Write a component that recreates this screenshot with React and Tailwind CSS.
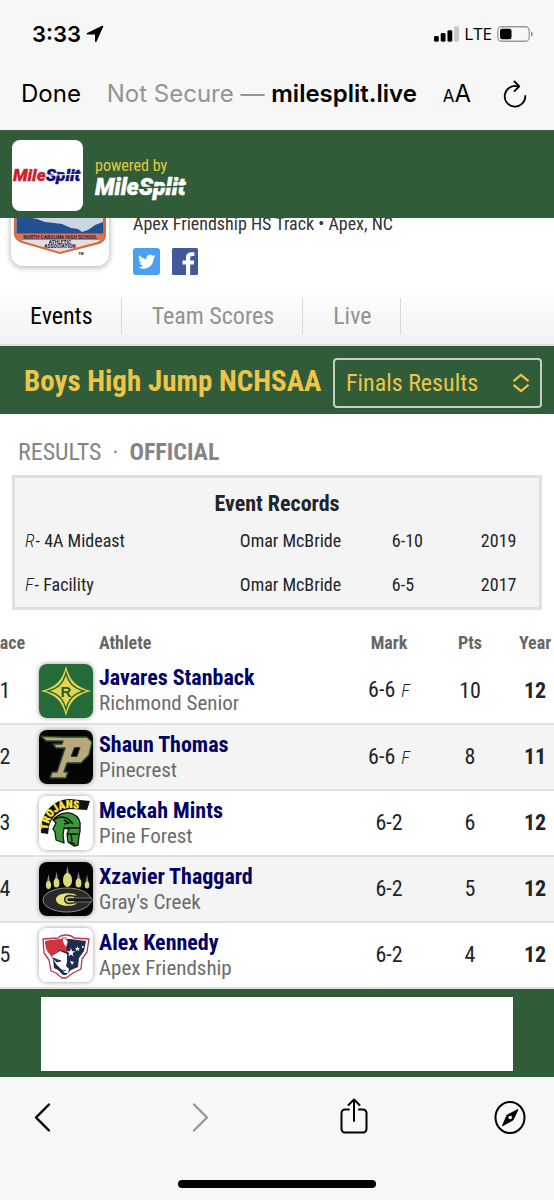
import React from "react";

function StatusBar() {
  return (
    <div className="flex h-[68px] items-center justify-between pl-8 pr-5">
      <div className="flex items-center gap-1">
        <span className="text-[22px] font-semibold leading-7">3:33</span>
        <svg width="20" height="20" viewBox="0 0 20 20" aria-hidden="true">
          <path
            d="M17.500 2.500L10.800 17.200V9.700H2.500z"
            stroke="#000"
            strokeWidth="1.600"
            strokeLinejoin="round"
          />
        </svg>
      </div>
      <div className="flex items-center gap-[5px]">
        <svg width="25" height="16" viewBox="0 0 26 16" aria-hidden="true">
          <rect x="0" y="10" width="5" height="6" rx="1.500" />
          <rect x="7" y="7" width="5" height="9" rx="1.500" />
          <rect x="14" y="4" width="5" height="12" rx="1.500" />
          <rect x="21" y="0" width="5" height="16" rx="1.500" fill="#c8c8c8" />
        </svg>
        <span className="font-['Open_Sans',sans-serif] text-[17px] font-medium leading-6">LTE</span>
        <svg width="37" height="16" viewBox="0 0 37 16" aria-hidden="true">
          <rect x=".75" y=".75" width="31.500" height="14.500" rx="4" fill="none" stroke="#999" strokeWidth="1.300" />
          <rect x="3" y="2.800" width="11.500" height="10.500" rx="2.200" />
          <path d="M34 5.500c2.300.8 2.300 4.200 0 5z" fill="#888" />
        </svg>
      </div>
    </div>
  );
}

function AddressBar() {
  return (
    <div className="flex h-[62px] items-start pl-[21px] pr-[27px] pt-[10px]">
      <button className="text-[24px] leading-8">Done</button>
      <p className="flex-1 text-center text-[24px] leading-8">
        <span className="text-[#949494]">Not Secure — </span>
        <span className="font-semibold">milesplit.live</span>
      </p>
      <button aria-label="Text size" className="mr-8 leading-8">
        <span className="text-[17px]">A</span>
        <span className="text-[24px]">A</span>
      </button>
      <button aria-label="Reload" className="h-8">
        <svg width="24" height="28" viewBox="0 0 24 28" fill="none" stroke="#000" strokeWidth="1.800" strokeLinecap="round" strokeLinejoin="round">
          <path d="M14.500 6.300A10.300 10.300 0 1 0 22.300 16M11.500 1.500l4.800 4.800-4.800 4.800" />
        </svg>
      </button>
    </div>
  );
}

function MileSplitMark({ first, second, slash, className }) {
  return (
    <svg viewBox="0 0 94 28" className={"overflow-visible " + className} role="img" aria-label="MileSplit">
      <text x="0" y="21" fontFamily="'Roboto', sans-serif" fontStyle="italic" fontWeight="900" fontSize="23" strokeWidth=".5">
        <tspan fill={first} stroke={first}>Mile</tspan>
        <tspan fill={second} stroke={second}>Split</tspan>
      </text>
      <path d="M43 13.800l50-1.500" stroke={slash} strokeWidth="1.400" fill="none" />
    </svg>
  );
}

function SiteHeader() {
  return (
    <header className="flex h-[88px] items-center gap-3 border-t-2 border-[#3f5a41] bg-[#305c39] px-3">
      <div className="flex size-[71px] items-center justify-center rounded-lg bg-white">
        <MileSplitMark first="#c8232c" second="#10107c" slash="#fff" className="w-[70px]" />
      </div>
      <div className="pt-[9px]">
        <p className="text-[16px] leading-4 text-[#e3c93f]">powered by</p>
        <MileSplitMark first="#fff" second="#fff" slash="#305c39" className="w-[94px]" />
      </div>
    </header>
  );
}

function AssociationBadge() {
  return (
    <svg width="98" height="98" viewBox="0 0 98 98" role="img" aria-label="North Carolina High School Athletic Association">
      <path d="M3 8h92v58c0 5-2 8-7 10L49 86 11 75c-5-2-8-5-8-9z" fill="#d8663f" />
      <path d="M5.500 10h87v56c0 4-2 6-6 8L49 84 13 73.500c-5-2-7-4-7.500-8z" fill="#e4ded9" />
      <path d="M5.500 30h87v37h-87z" fill="#245090" />
      <path d="M16 40h76v14l-8 3-7 5-6 2-4-3-7-1-9-4-8-1-9-1-8-3-10-2z" fill="#ccd6e2" />
      <path d="M4 65.500h90l-2 6.500H7z" fill="#dd7450" />
      <g fill="#1c2f62" fontFamily="'Roboto', sans-serif" fontWeight="900" textAnchor="middle">
        <text x="49" y="70.500" fontSize="4.800">NORTH CAROLINA HIGH SCHOOL</text>
        <text x="49" y="75.800" fontSize="4.800">ATHLETIC</text>
        <text x="49" y="80" fontSize="4.800">ASSOCIATION</text>
        <text x="70" y="87" fontSize="3.500">TM</text>
      </g>
    </svg>
  );
}

function MeetSummary() {
  return (
    <section className="flex h-[68px] items-end gap-6 overflow-hidden pl-[11px]">
      <div className="mb-5 shrink-0 rounded-xl bg-white shadow-[0_1px_6px_rgba(0,0,0,0.35)]">
        <AssociationBadge />
      </div>
      <div className="mb-[11px] flex flex-col gap-3">
        <p className="text-[18px] leading-6 text-[#333]">Apex Friendship HS Track • Apex, NC</p>
        <div className="flex gap-3">
          <a href="#twitter" aria-label="Twitter">
            <svg width="27" height="27" viewBox="0 0 27 27">
              <rect width="27" height="27" rx="3" fill="#4a9ff0" />
              <path transform="translate(4.500 4.500) scale(.76)" fill="#fff" d="M23.600 5c-.8.400-1.700.6-2.700.8 1-.6 1.700-1.500 2-2.600-.9.500-1.900.9-3 1.100a4.700 4.700 0 0 0-8 4.300C8 8.400 4.600 6.500 2.300 3.700c-1.200 2.100-.6 4.800 1.500 6.200-.8 0-1.500-.2-2.100-.6 0 2.300 1.600 4.200 3.700 4.700-.7.200-1.400.2-2.100.1.600 1.800 2.300 3.200 4.400 3.200A9.500 9.500 0 0 1 .8 19.200c2.100 1.300 4.500 2.100 7.200 2.100 8.700 0 13.600-7.400 13.300-13.900.9-.7 1.700-1.500 2.300-2.400z" />
            </svg>
          </a>
          <a href="#facebook" aria-label="Facebook">
            <svg width="26" height="27" viewBox="0 0 26 27">
              <rect width="26" height="27" rx="1.500" fill="#41589b" />
              <path fill="#fff" d="M14 27V16.500h-3.500v-4H14V9.500C14 6 16.200 4.200 19.400 4.200c1.500 0 2.500.1 3 .2v3.600h-2.200c-1.700 0-2 .8-2 2v2.500h4.100l-.6 4h-3.500V27z" />
            </svg>
          </a>
        </div>
      </div>
    </section>
  );
}

function Tabs() {
  const tabs = ["Events", "Team Scores", "Live"];
  return (
    <nav className="flex h-[60px] items-center border-b-2 border-[#e2e2e2] bg-linear-to-b from-white to-[#f2f2f2] pt-[2px]">
      {tabs.map((tab, i) => (
        <a
          key={tab}
          href={"#" + tab.toLowerCase().replace(" ", "-")}
          className={
            "border-r border-[#d8d8d8] pl-[30px] pr-7 text-[24px] leading-9 " + (i === 0 ? "text-black" : "text-[#929292]")
          }
        >
          {tab}
        </a>
      ))}
    </nav>
  );
}

function EventBar() {
  return (
    <div className="flex h-[68px] items-center justify-between bg-[#305c39] pl-6 pr-3">
      <h1 className="whitespace-nowrap pt-[2px] text-[29px] font-bold leading-9 text-[#ecc549]">Boys High Jump NCHSAA</h1>
      <div className="relative w-[209px] shrink-0 pt-[5px]">
        <select
          aria-label="Round"
          className="h-[50px] w-full appearance-none rounded border-2 border-[#c3d1c5] bg-[#305c39] pl-[11px] text-[24px] text-[#ecc549]"
        >
          <option>Finals Results</option>
        </select>
        <svg className="pointer-events-none absolute right-3 top-5" width="18" height="20" viewBox="0 0 18 20" fill="none" stroke="#ecc549" strokeWidth="2.200">
          <path d="M1.500 8.200L9 2l7.500 6.200M1.500 11.800L9 18l7.500-6.200" />
        </svg>
      </div>
    </div>
  );
}

const records = [
  { code: "R", label: "4A Mideast", holder: "Omar McBride", mark: "6-10", year: "2019" },
  { code: "F", label: "Facility", holder: "Omar McBride", mark: "6-5", year: "2017" },
];

function EventRecords() {
  return (
    <div className="mx-3 border-[3px] border-[#e0e0e0] bg-[#f4f4f4] pt-[10px] text-[#212529]">
      <table className="w-full table-fixed text-left text-[18px] leading-6">
        <caption className="h-[31px] text-[22px] font-bold leading-[31px]">Event Records</caption>
        <colgroup>
          <col className="w-[41%]" />
          <col className="w-[29%]" />
          <col className="w-[17%]" />
          <col />
        </colgroup>
        <tbody>
          {records.map((r) => (
            <tr key={r.code} className="h-11">
              <td className="pl-[10px]">
                <i className="pr-[1px] font-light">{r.code}</i>- {r.label}
              </td>
              <td className="pl-[10px]">{r.holder}</td>
              <td className="pl-[10px]">{r.mark}</td>
              <td className="pl-[10px]">{r.year}</td>
            </tr>
          ))}
        </tbody>
      </table>
    </div>
  );
}

function RichmondLogo() {
  return (
    <svg viewBox="0 0 54 54" className="size-full">
      <rect width="54" height="54" fill="#256b3a" />
      <path d="M27 2c3.500 14 10 21.500 25 25-15 3.500-21.500 11-25 25C23.500 38 17 30.500 2 27 17 23.500 23.500 16 27 2z" fill="#ead44e" />
      <path d="M27 9c3 10.500 7.500 15 18 18-10.500 3-15 7.500-18 18-3-10.500-7.500-15-18-18 10.500-3 15-7.500 18-18z" fill="none" stroke="#256b3a" strokeWidth="1.500" />
      <text x="27" y="32.500" textAnchor="middle" fontFamily="'Liberation Sans', sans-serif" fontWeight="700" fontSize="15" fill="#1f5c33">R</text>
    </svg>
  );
}

function PinecrestLogo() {
  return (
    <svg viewBox="0 0 54 54" className="size-full">
      <rect width="54" height="54" fill="#050505" />
      <path
        d="M2 6c13 1.500 26 1 46 1l5 5-3 13-8 8H28l-3 9h4l-2 6H11l2-6h5l8-24h-9l-3-4h9l1-3H7z"
        fill="#b9a878"
        stroke="#24482c"
        strokeWidth="1.400"
        strokeLinejoin="round"
      />
      <path d="M35.500 17.500H41l-3 9h-6z" fill="#050505" stroke="#24482c" />
    </svg>
  );
}

function TrojansLogo() {
  return (
    <svg viewBox="0 0 54 54" className="size-full">
      <rect width="54" height="54" fill="#fff" />
      <path d="M2 37C1 18 13 3.500 31 3l20 2-3 9-16-1C20 14 12 21 10 31l-1 7z" fill="#111" />
      <defs>
        <path id="trojanArc" d="M9 36C8 21 18 12 31 12l22 2" />
      </defs>
      <text fontFamily="'Roboto Condensed', sans-serif" fontWeight="900" fontSize="11" fill="#f4e83b" stroke="#f4e83b" strokeWidth=".3">
        <textPath href="#trojanArc" startOffset="2">TROJANS</textPath>
      </text>
      <path
        d="M14 24c5-6 13-9 20-6 5 2 8 7 7 13v4l-1 5-1 9-4 1-6-4-1-8 2-5-5-1-1 7 1 8-8-3-1-8-2-3 3-6z"
        fill="#3f973b"
        stroke="#111"
        strokeWidth="1.300"
        strokeLinejoin="round"
      />
      <path d="M14 24c8-5 15-3 20 4M25 24l5 3-5 1M28 32h13M29 38h10M32 38l1 7M31 46l5 2" fill="none" stroke="#111" strokeWidth="1.500" />
    </svg>
  );
}

function GraysCreekLogo() {
  const claws = [
    [9.500, 23, 4],
    [17.500, 21, 4.500],
    [28.500, 18, 7],
    [39.500, 21, 4.500],
    [48, 23, 3.500],
  ];
  return (
    <svg viewBox="0 0 54 54" className="size-full">
      <rect width="54" height="54" fill="#050505" />
      {claws.map(([x, y, r]) => (
        <g key={x}>
          <path d={`M${x - 1.500} ${y - r + 1}L${x} ${y - r - 7}L${x + 1.500} ${y - r + 1}z`} fill="#8a8a7c" />
          <ellipse cx={x} cy={y} rx={r * 0.65} ry={r} fill="#dcd977" />
        </g>
      ))}
      <ellipse cx="28" cy="38" rx="24" ry="12" fill="#292929" stroke="#aaa" strokeWidth=".8" />
      <path d="M28 36h25v4H28z" fill="#171717" stroke="#aaa" strokeWidth=".6" />
      <path d="M38 33.500c-5-4-21-3-21 4s16 8 21 4h-3c-4 1.500-10 1-10-4s6-5.500 10-4z" fill="#e6e17d" />
      <path d="M35 35.500c-5-1-8 0-8 2s3 3 8 2" fill="none" stroke="#e6e17d" strokeWidth="1.200" />
    </svg>
  );
}

function ApexLogo() {
  return (
    <svg viewBox="0 0 54 54" className="size-full">
      <rect width="54" height="54" fill="#fff" />
      <path
        d="M4 11l15-1c4-4 12-4 16 0l15 1-2 13-5 7-1 10-8 4-7 5h-4l-6-5-5-2-2-11-5-7z"
        fill="#fff"
        stroke="#b9354a"
        strokeWidth="1.300"
        strokeLinejoin="round"
      />
      <path d="M6 13l17-2h8l16 2-2 10-5 7-1 9-7 3-5 5h-3l-5-5-4-2-1-9-5-8z" fill="#202d4e" />
      <path d="M6 13l17-2 4 4 1 9-7-2-8 6C8 25 6 19 6 13z" fill="#cf3541" />
      <path d="M23 10h4l2 4-2 6-3-5z" fill="#fff" stroke="#b52a3a" strokeWidth=".9" />
      <path d="M13 28l8-5 7 3v8l-1 4 3 3-1 4h-3l-4-4-5-5z" fill="#fff" />
      <path d="M14 30l8 3-4 1zM21 42l6 .5" fill="#202d4e" stroke="#202d4e" strokeWidth=".9" />
      <path
        d="M32 20l1 3.200h3.300l-2.700 2 1 3.300-2.600-2-2.700 2 1-3.300-2.600-2H31zM38.500 18l.7 2h2l-1.600 1.300.6 2-1.700-1.200-1.700 1.200.6-2-1.600-1.300h2zM43 18h1.500v2H43zM31 33l4 1-2 3z"
        fill="#fff"
      />
    </svg>
  );
}

const results = [
  { place: 1, name: "Javares Stanback", school: "Richmond Senior", mark: "6-6", note: "F", pts: 10, year: 12, Logo: RichmondLogo },
  { place: 2, name: "Shaun Thomas", school: "Pinecrest", mark: "6-6", note: "F", pts: 8, year: 11, Logo: PinecrestLogo },
  { place: 3, name: "Meckah Mints", school: "Pine Forest", mark: "6-2", pts: 6, year: 12, Logo: TrojansLogo },
  { place: 4, name: "Xzavier Thaggard", school: "Gray's Creek", mark: "6-2", pts: 5, year: 12, Logo: GraysCreekLogo },
  { place: 5, name: "Alex Kennedy", school: "Apex Friendship", mark: "6-2", pts: 4, year: 12, Logo: ApexLogo },
];

function ResultsTable() {
  return (
    <div className="flex justify-end overflow-hidden pt-[18px]">
      <table className="w-[calc(100%+29px)] shrink-0 table-fixed text-center text-[22px] leading-[26px] text-[#212529]">
        <colgroup>
          <col className="w-[68px]" />
          <col className="w-[60px]" />
          <col />
          <col className="w-[70px]" />
          <col className="w-[92px]" />
          <col className="w-[38px]" />
        </colgroup>
        <thead>
          <tr className="h-[30px] text-[18px] text-[#666]">
            <th>Place</th>
            <td />
            <th className="text-left">Athlete</th>
            <th>Mark</th>
            <th>Pts</th>
            <th>Year</th>
          </tr>
        </thead>
        <tbody>
          {results.map(({ Logo, ...r }) => (
            <tr key={r.place} className="h-[66px] border-b-2 border-[#e0e0e0] even:bg-[#f4f4f4]">
              <td>{r.place}</td>
              <td>
                <div className="size-[54px] overflow-hidden rounded-lg shadow-[0_0_5px_rgba(0,0,0,0.4)]">
                  <Logo />
                </div>
              </td>
              <td className="text-left">
                <a href={"#athlete-" + r.place} className="block font-bold text-[#000066]">{r.name}</a>
                <span className="block text-[21px] leading-[25px] text-[#6b6b6b]">{r.school}</span>
              </td>
              <td className="whitespace-nowrap">
                {r.mark}
                {r.note && <i className="pl-[2px] text-[18px] font-light"> {r.note}</i>}
              </td>
              <td>{r.pts}</td>
              <td className="font-bold">{r.year}</td>
            </tr>
          ))}
        </tbody>
      </table>
    </div>
  );
}

function BottomBar() {
  return (
    <footer className="flex flex-1 flex-col justify-between bg-[#f7f7f7] pb-3 pt-5">
      <div className="flex items-center justify-between pl-[34px] pr-[27px]">
        <button aria-label="Back">
          <svg width="18" height="40" viewBox="0 0 18 40" fill="none" stroke="#000" strokeWidth="2.400" strokeLinecap="round" strokeLinejoin="round"><path d="M15 7.500L2 20.500l13 13" /></svg>
        </button>
        <button aria-label="Forward" className="ml-5">
          <svg width="18" height="40" viewBox="0 0 18 40" fill="none" stroke="#999" strokeWidth="2.400" strokeLinecap="round" strokeLinejoin="round"><path d="M2 7.500l13 13-13 13" /></svg>
        </button>
        <button aria-label="Share" className="ml-2 mr-1">
          <svg width="30" height="40" viewBox="0 0 30 40" fill="none" stroke="#000" strokeWidth="2" strokeLinecap="round" strokeLinejoin="round"><path d="M10 12.500H6a3.500 3.500 0 0 0-3.500 3.500v16A3.500 3.500 0 0 0 6 35.500h18a3.500 3.500 0 0 0 3.500-3.500V16a3.500 3.500 0 0 0-3.500-3.500h-4M15 24V2.500M9.500 8L15 2.500 20.500 8" /></svg>
        </button>
        <button aria-label="Open in browser">
          <svg width="34" height="40" viewBox="0 0 34 40"><ellipse cx="17" cy="20.500" rx="14.500" ry="15.500" fill="none" stroke="#000" strokeWidth="2" /><path fillRule="evenodd" d="M25 12.500l-5 10.500-10.500 5.800 4.500-10.600zM17.200 18.300a2.200 2.200 0 1 0 .01 0z" stroke="#000" strokeLinejoin="round" /></svg>
        </button>
      </div>
      <div className="mx-auto h-2 w-[198px] rounded-full bg-black" />
    </footer>
  );
}

export default function App() {
  return (
    <div className="flex min-h-screen flex-col bg-white font-['Roboto_Condensed','Liberation_Sans_Narrow','Roboto',sans-serif]">
      <div className="bg-[#f7f7f7] font-['Inter',sans-serif]">
        <StatusBar />
        <AddressBar />
      </div>
      <SiteHeader />
      <main>
        <MeetSummary />
        <Tabs />
        <EventBar />
        <h2 className="flex h-[61px] items-center gap-[11px] pl-[18px] pt-[14px] text-[24px] font-normal leading-8 text-[#858585]">
          <span>RESULTS</span>
          <span>·</span>
          <b>OFFICIAL</b>
        </h2>
        <EventRecords />
        <ResultsTable />
        <div className="bg-[#305c39] px-[41px] pb-[6px] pt-2">
          <div className="h-[74px] bg-white" />
        </div>
      </main>
      <BottomBar />
    </div>
  );
}
